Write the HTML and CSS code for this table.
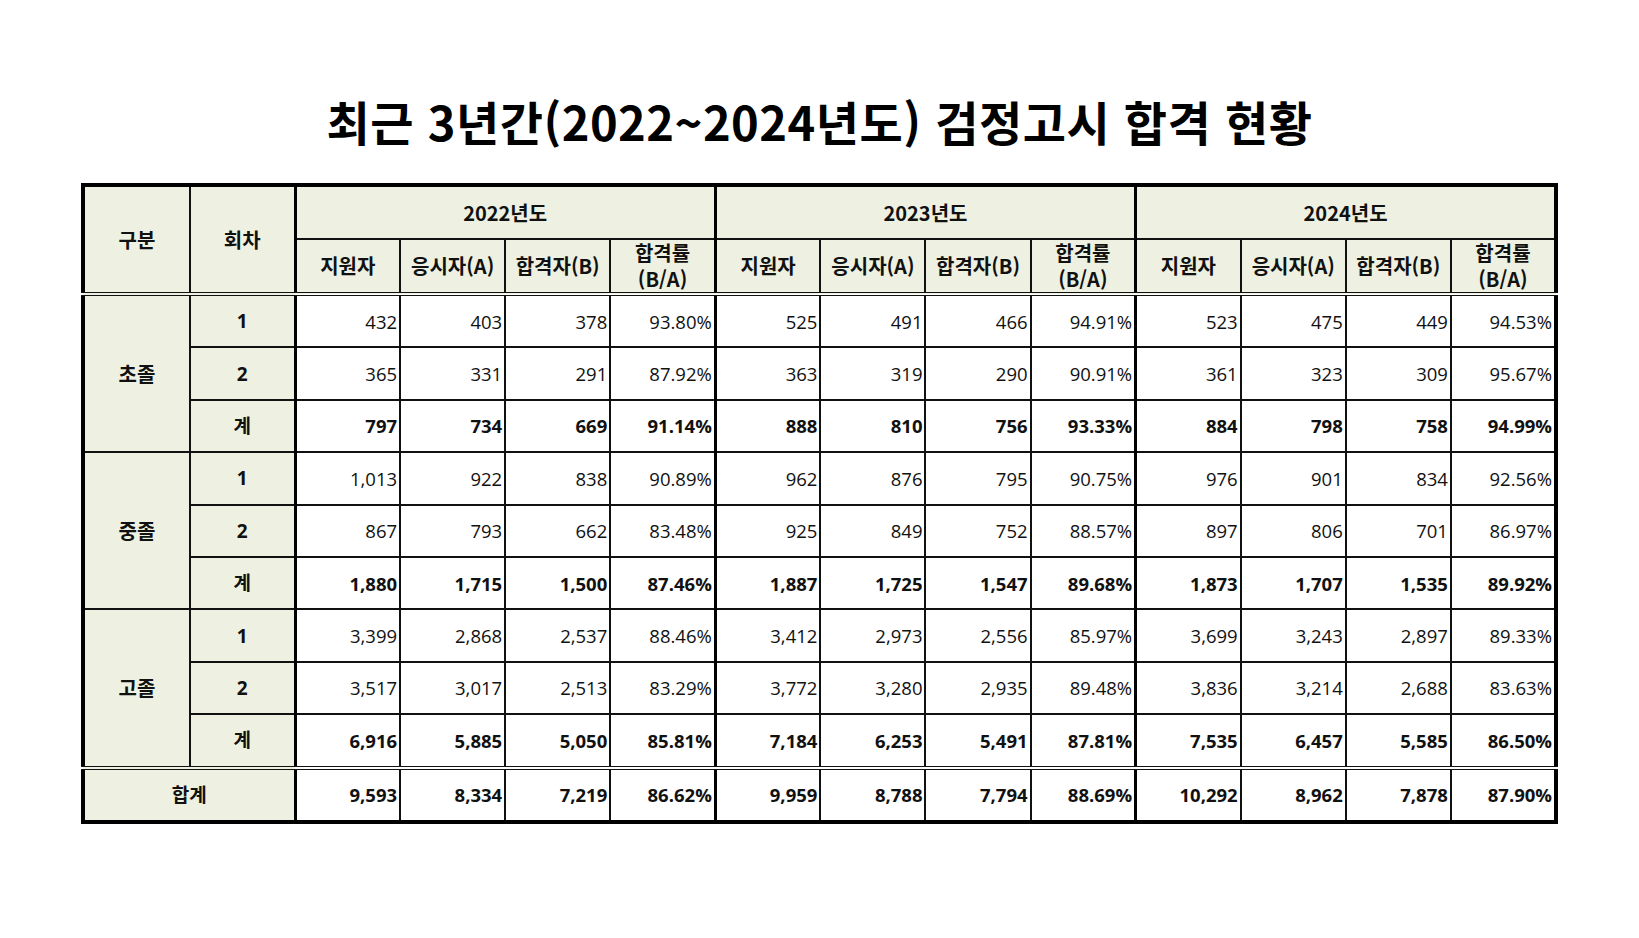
FILE: index.html
```html
<!DOCTYPE html>
<html lang="ko">
<head>
<meta charset="utf-8">
<link rel="stylesheet" href="styles.css">
</head>
<body>
<h1 class="title">최근 3년간(2022~2024년도) 검정고시 합격 현황</h1>
<table class="stats">
  <colgroup>
    <col class="c-gubun"><col class="c-round">
    <col><col><col><col><col><col><col><col><col><col><col><col>
  </colgroup>
  <thead>
    <tr class="h1">
      <th rowspan="2" class="hd gubun">구분</th>
      <th rowspan="2" class="hd round">회차</th>
      <th colspan="4" class="hd yr end">2022년도</th>
      <th colspan="4" class="hd yr end">2023년도</th>
      <th colspan="4" class="hd yr end">2024년도</th>
    </tr>
    <tr class="h2">
      <th class="hd">지원자</th><th class="hd">응시자(A)</th><th class="hd">합격자(B)</th><th class="hd end">합격률<br>(B/A)</th>
      <th class="hd">지원자</th><th class="hd">응시자(A)</th><th class="hd">합격자(B)</th><th class="hd end">합격률<br>(B/A)</th>
      <th class="hd">지원자</th><th class="hd">응시자(A)</th><th class="hd">합격자(B)</th><th class="hd end">합격률<br>(B/A)</th>
    </tr>
  </thead>
  <tbody>
    <tr>
      <th rowspan="3" class="hd gubun">초졸</th><th class="hd round">1</th>
      <td>432</td><td>403</td><td>378</td><td class="end">93.80%</td>
      <td>525</td><td>491</td><td>466</td><td class="end">94.91%</td>
      <td>523</td><td>475</td><td>449</td><td class="end">94.53%</td>
    </tr>
    <tr>
      <th class="hd round">2</th>
      <td>365</td><td>331</td><td>291</td><td class="end">87.92%</td>
      <td>363</td><td>319</td><td>290</td><td class="end">90.91%</td>
      <td>361</td><td>323</td><td>309</td><td class="end">95.67%</td>
    </tr>
    <tr class="sum">
      <th class="hd round">계</th>
      <td>797</td><td>734</td><td>669</td><td class="end">91.14%</td>
      <td>888</td><td>810</td><td>756</td><td class="end">93.33%</td>
      <td>884</td><td>798</td><td>758</td><td class="end">94.99%</td>
    </tr>
    <tr>
      <th rowspan="3" class="hd gubun">중졸</th><th class="hd round">1</th>
      <td>1,013</td><td>922</td><td>838</td><td class="end">90.89%</td>
      <td>962</td><td>876</td><td>795</td><td class="end">90.75%</td>
      <td>976</td><td>901</td><td>834</td><td class="end">92.56%</td>
    </tr>
    <tr>
      <th class="hd round">2</th>
      <td>867</td><td>793</td><td>662</td><td class="end">83.48%</td>
      <td>925</td><td>849</td><td>752</td><td class="end">88.57%</td>
      <td>897</td><td>806</td><td>701</td><td class="end">86.97%</td>
    </tr>
    <tr class="sum">
      <th class="hd round">계</th>
      <td>1,880</td><td>1,715</td><td>1,500</td><td class="end">87.46%</td>
      <td>1,887</td><td>1,725</td><td>1,547</td><td class="end">89.68%</td>
      <td>1,873</td><td>1,707</td><td>1,535</td><td class="end">89.92%</td>
    </tr>
    <tr>
      <th rowspan="3" class="hd gubun last">고졸</th><th class="hd round">1</th>
      <td>3,399</td><td>2,868</td><td>2,537</td><td class="end">88.46%</td>
      <td>3,412</td><td>2,973</td><td>2,556</td><td class="end">85.97%</td>
      <td>3,699</td><td>3,243</td><td>2,897</td><td class="end">89.33%</td>
    </tr>
    <tr>
      <th class="hd round">2</th>
      <td>3,517</td><td>3,017</td><td>2,513</td><td class="end">83.29%</td>
      <td>3,772</td><td>3,280</td><td>2,935</td><td class="end">89.48%</td>
      <td>3,836</td><td>3,214</td><td>2,688</td><td class="end">83.63%</td>
    </tr>
    <tr class="sum last">
      <th class="hd round">계</th>
      <td>6,916</td><td>5,885</td><td>5,050</td><td class="end">85.81%</td>
      <td>7,184</td><td>6,253</td><td>5,491</td><td class="end">87.81%</td>
      <td>7,535</td><td>6,457</td><td>5,585</td><td class="end">86.50%</td>
    </tr>
    <tr class="sum total">
      <th colspan="2" class="hd round">합계</th>
      <td>9,593</td><td>8,334</td><td>7,219</td><td class="end">86.62%</td>
      <td>9,959</td><td>8,788</td><td>7,794</td><td class="end">88.69%</td>
      <td>10,292</td><td>8,962</td><td>7,878</td><td class="end">87.90%</td>
    </tr>
  </tbody>
</table>
</body>
</html>
```

FILE: styles.css
```css
html, body {
  margin: 0;
  padding: 0;
  background: #ffffff;
}

body {
  font-family: "Open Sans", "Noto Sans CJK KR", sans-serif;
  color: #111111;
}

.title {
  margin: 92px 0 33px 0;
  text-align: center;
  font-family: "Noto Sans CJK KR", sans-serif;
  font-weight: 700;
  font-size: 47px;
  line-height: 58px;
  letter-spacing: 0.5px;
  color: #000000;
}

.stats {
  margin: 0 auto;
  width: 1477px;
  table-layout: fixed;
  border-collapse: collapse;
  border: 4px solid #000000;
  font-size: 18px;
}

.c-gubun { width: 107px; }
.c-round { width: 105px; }

.stats th,
.stats td {
  border: 2px solid #111111;
  padding: 0 2px 0 0;
  height: 50.4px;
}

.stats thead tr.h1 th { height: 51px; }
.stats thead tr.h2 th { height: 52px; border-bottom: 4px double #111111; }
.stats thead th.gubun,
.stats thead th.round { border-bottom: 4px double #111111; }

.hd {
  background: #eef1e2;
  font-family: "Noto Sans CJK KR", sans-serif;
  font-weight: 700;
  font-size: 20px;
  line-height: 26px;
  text-align: center;
}

.stats th.hd { padding: 0; }

.stats th.round { border-right: 3px solid #000000; }
.stats .end { border-right: 3px solid #000000; }

.stats td {
  text-align: right;
  font-weight: 400;
  font-size: 18.5px;
  background: #ffffff;
}

.stats tr.sum td { font-weight: 700; }

.stats tbody th.round { font-family: "Open Sans", "Noto Sans CJK KR", sans-serif; font-size: 19px; }

.stats tr.last td,
.stats tr.last th,
.stats th.gubun.last { border-bottom: 4px double #111111; }
```
